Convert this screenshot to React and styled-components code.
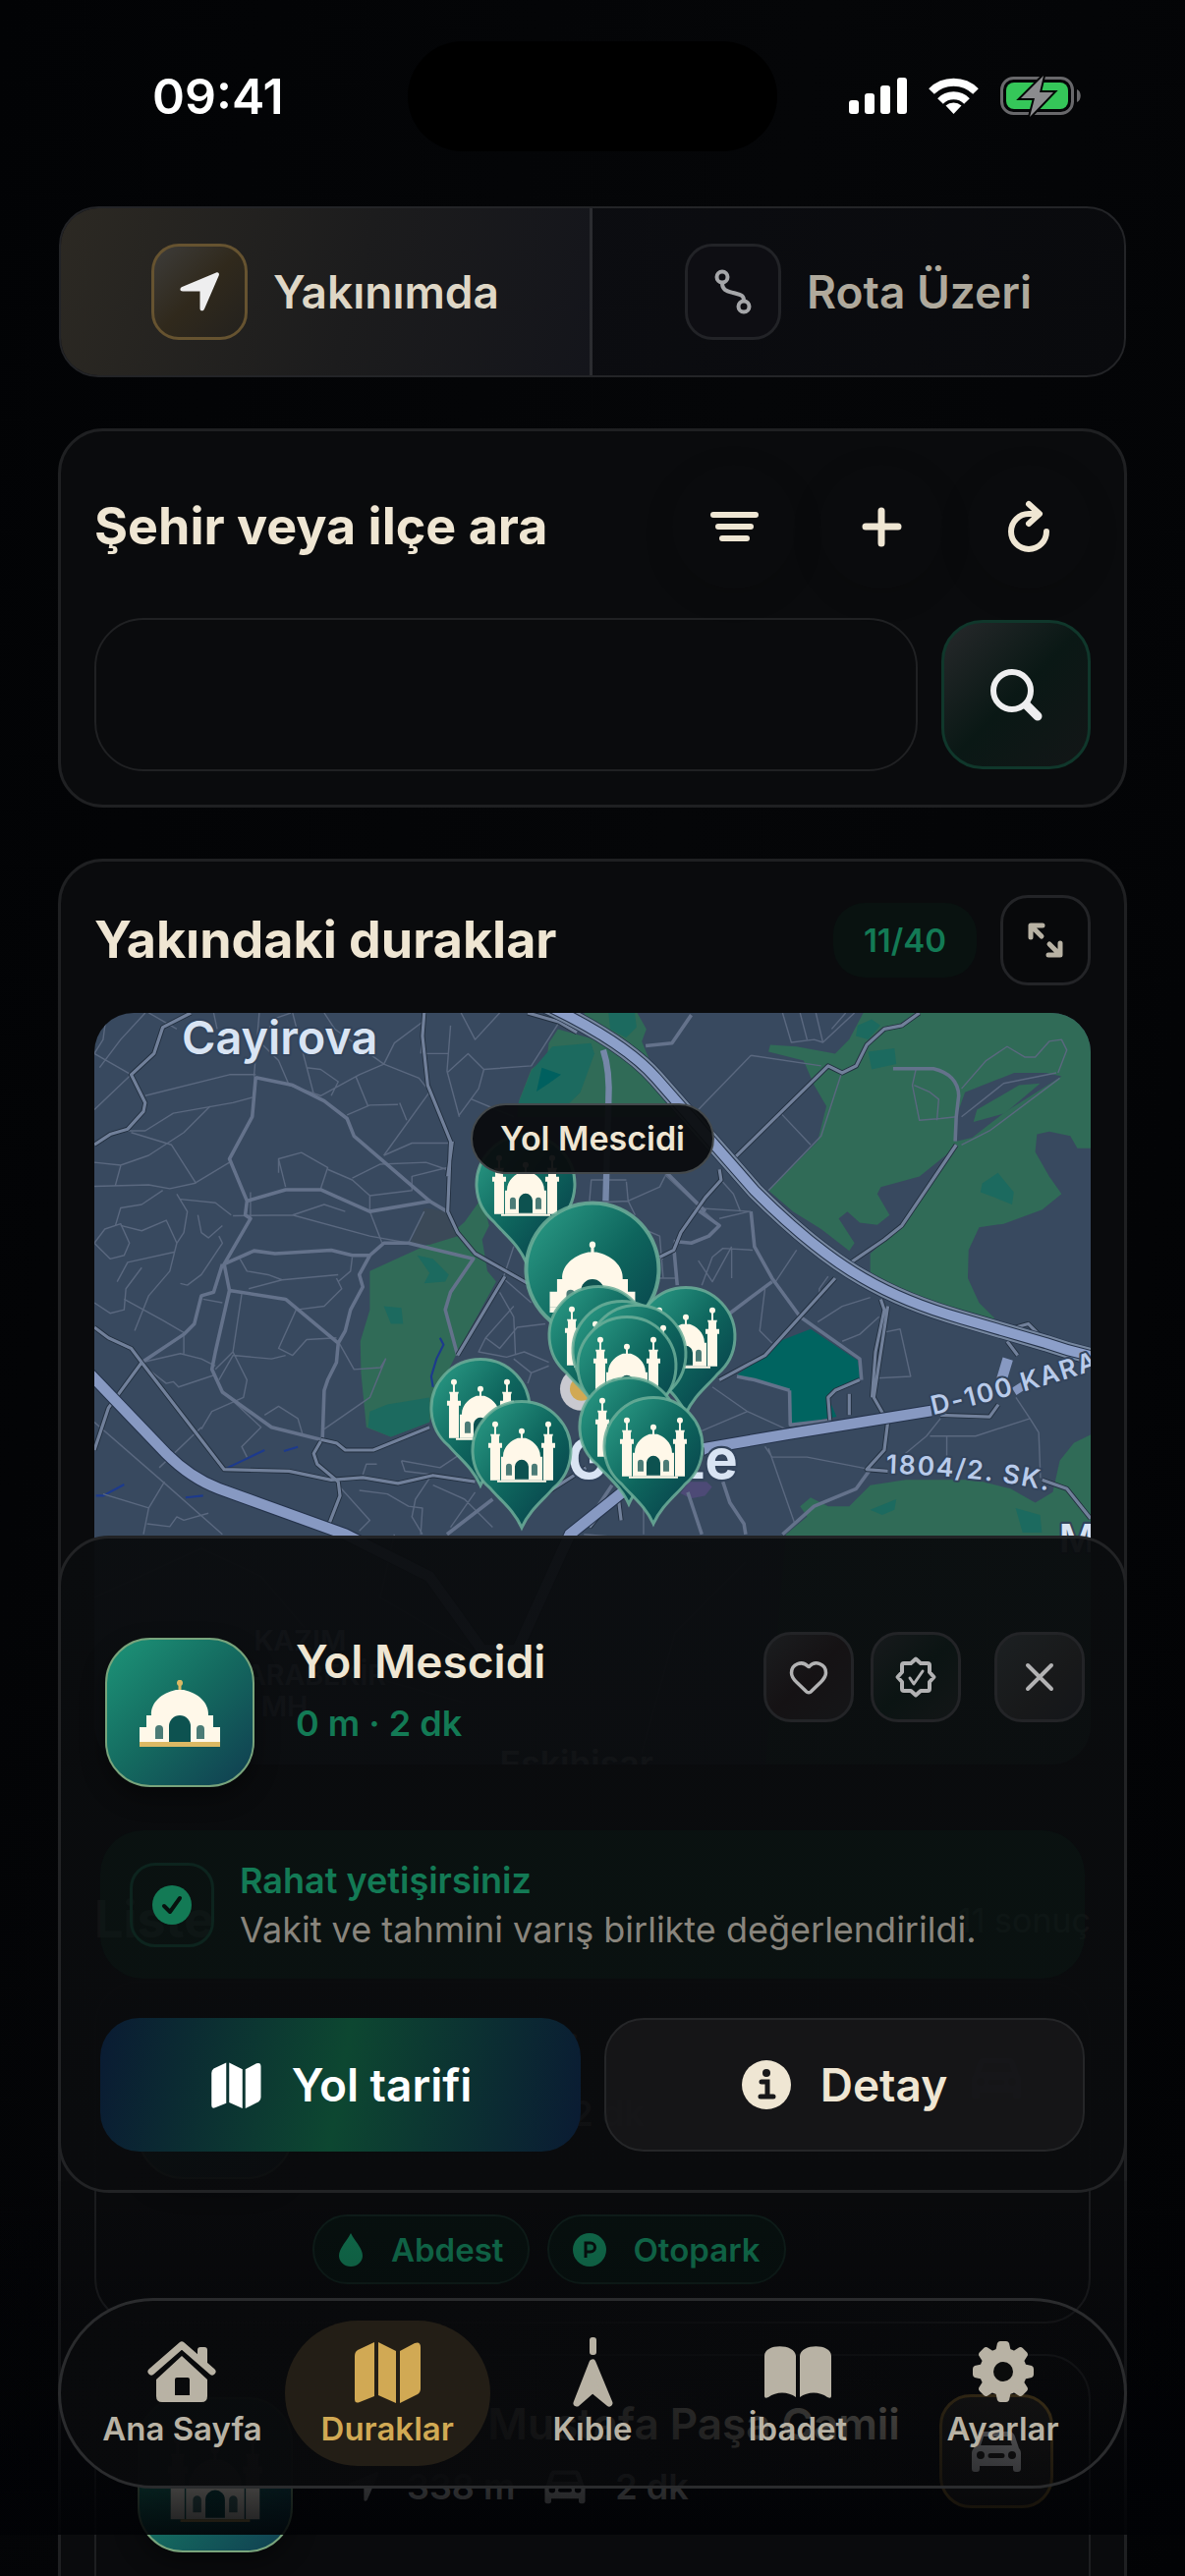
import React, { useId } from 'react'
import styled, { createGlobalStyle, css } from 'styled-components'
import { Heart } from 'lucide-react'

const colors = {
  cream: '#efe6d3',
  muted: '#b8b2a4',
  green: '#137a55',
  gold: '#d1a954',
  line: '#1f2022',
}

const GlobalStyle = createGlobalStyle`
  * {
    box-sizing: border-box;
  }

  body {
    margin: 0;
    background: #030405;
    color: ${colors.cream};
    font-family: Inter, 'Noto Sans', sans-serif;
  }

  button,
  input {
    margin: 0;
    padding: 0;
    border: 0;
    background: none;
    color: inherit;
    font: inherit;
  }

  svg {
    display: block;
    flex: none;
  }
`

const Screen = styled.div`
  position: relative;
  height: 100vh;
  overflow: hidden;
  background: linear-gradient(100deg, #020305, #050608 50%, #020305);
`

const StatusBar = styled.header`
  display: grid;
  grid-template-columns: 1fr 376px 1fr;
  align-items: center;
  height: 195px;
  padding: 0 105px;
`

const Clock = styled.time`
  padding-left: 50px;
  color: #fff;
  font-size: 50px;
  font-weight: 600;
`

const Island = styled.div`
  height: 112px;
  border-radius: 56px;
  background: #000;
`

const StatusIcons = styled.div`
  display: flex;
  justify-content: flex-end;
  align-items: center;
  gap: 22px;
`

const Content = styled.main`
  display: flex;
  flex-direction: column;
  gap: 52px;
  padding: 15px 60px 0;
`

const Segmented = styled.div`
  display: grid;
  grid-template-columns: 1fr 1fr;
  height: 174px;
  border: 2px solid #232427;
  border-radius: 40px;
  background: linear-gradient(110deg, #0e0f14, #090a0d);
  overflow: hidden;
`

const Segment = styled.button`
  display: flex;
  justify-content: center;
  align-items: center;
  gap: 26px;
  color: ${props => (props.$active ? '#dfd7c6' : '#afa99c')};
  font-size: 46px;
  font-weight: 600;
  ${props =>
    props.$active &&
    css`
      border-right: 3px solid #2b2c30;
      background: linear-gradient(105deg, #2c2923, #1c1c1d 55%, #14151b);
    `}
`

const SegmentIcon = styled.span`
  display: grid;
  place-items: center;
  width: 98px;
  height: 98px;
  border: 3px solid ${props => (props.$active ? '#665330' : '#222327')};
  border-radius: 28px;
  background: ${props =>
    props.$active ? 'linear-gradient(135deg, #3d3c3a, #30291c 50%, #23211e)' : '#0e0e13'};
  color: #eeeeef;
`

const Card = styled.section`
  margin: 0 -1px;
  padding: 34px;
  border: 3px solid ${colors.line};
  border-radius: 46px;
  background: #0a0b0d;
`

const CardHeader = styled.div`
  display: flex;
  align-items: center;
  gap: 24px;
  margin-bottom: ${props => props.$gap}px;
`

const Title = styled.h2`
  flex: 1;
  margin: 0;
  font-size: 52px;
  font-weight: 700;
  line-height: 64px;
`

const RoundButton = styled.button`
  display: grid;
  place-items: center;
  width: 126px;
  height: 126px;
  border-radius: 50%;
  box-shadow: 0 8px 30px rgba(0, 5, 10, 0.15);
`

const SearchRow = styled.form`
  display: flex;
  align-items: center;
  gap: 24px;
`

const SearchInput = styled.input`
  flex: 1;
  min-width: 0;
  height: 156px;
  padding: 0 40px;
  border: 2px solid #202123;
  border-radius: 50px;
  font-size: 46px;
  outline: none;
`

const SearchButton = styled.button`
  display: grid;
  place-items: center;
  width: 152px;
  height: 152px;
  border: 3px solid #10372b;
  border-radius: 42px;
  background: linear-gradient(135deg, #27292b, #0a1815 50%, #131617);
  color: #eeeeef;
`

const CountPill = styled.span`
  display: grid;
  place-items: center;
  width: 146px;
  height: 76px;
  border-radius: 32px;
  background: #091210;
  color: ${colors.green};
  font-size: 33px;
  font-weight: 600;
`

const SquareButton = styled.button`
  display: grid;
  place-items: center;
  width: 92px;
  height: 92px;
  border: 3px solid #232427;
  border-radius: 28px;
  background: ${props => props.$bg || '#08090b'};
  color: #b2b2b3;
`

const MapFrame = styled.div`
  position: relative;
  overflow: hidden;
  height: 765px;
  border-radius: 40px;
  background: #38495f;

  > svg {
    width: 100%;
    height: 100%;
  }
`

const MapTooltip = styled.div`
  position: absolute;
  top: 92px;
  left: 50%;
  transform: translateX(-50%);
  padding: 12px 28px;
  border: 2px solid #44494c;
  border-radius: 36px;
  background: rgba(9, 12, 14, 0.95);
  font-size: 34px;
  font-weight: 600;
  line-height: 44px;
  white-space: nowrap;
`

const ListHeader = styled.div`
  display: flex;
  align-items: center;
  margin: 126px 0 30px;
  color: ${colors.cream};
  font-size: 34px;
`

const StopList = styled.ul`
  display: flex;
  flex-direction: column;
  gap: 31px;
  margin: 0;
  padding: 0;
  list-style: none;
`

const Stop = styled.li`
  height: 349px;
  padding: 39px 36px 39px 42px;
  border: 2px solid #1e1f21;
  border-radius: 46px;
`

const StopTop = styled.div`
  display: flex;
  align-items: flex-start;
`

const StopInfo = styled.div`
  flex: 1;
  padding-left: 48px;
`

const StopName = styled.h3`
  margin: 0;
  font-size: 44px;
  font-weight: 600;
  line-height: 60px;
  white-space: nowrap;
`

const StopMeta = styled.div`
  display: flex;
  align-items: center;
  gap: 28px;
  margin-top: 6px;
  padding-left: 8px;
  color: #b4b4b4;
  font-size: 36px;
  font-weight: 600;
  line-height: 56px;
`

const Tile = styled.div`
  display: grid;
  place-items: center;
  width: ${props => props.$size}px;
  height: ${props => props.$size}px;
  margin-top: ${props => props.$drop || 0}px;
  border: 2px solid #79a47c;
  border-radius: 46px;
  background: linear-gradient(135deg, #1d9478, #14695f 50%, #103d50);
  box-shadow: 0 10px 24px rgba(0, 0, 0, 0.4);
`

const RouteButton = styled.button`
  display: grid;
  place-items: center;
  width: 116px;
  height: 116px;
  border: 3px solid #7d6029;
  border-radius: 32px;
  background: #252320;
  color: #f0f0f2;
`

const Chips = styled.div`
  display: flex;
  gap: 18px;
  margin-top: 36px;
  padding-left: 178px;
`

const Chip = styled.span`
  display: flex;
  align-items: center;
  height: 71px;
  padding: 0 24px;
  gap: 28px;
  border: 2px solid #10201c;
  border-radius: 36px;
  background: #081210;
  color: ${colors.green};
  font-size: 33px;
  font-weight: 600;
`

const BottomFade = styled.div`
  position: absolute;
  right: 0;
  bottom: 42px;
  left: 0;
  height: 360px;
  background: linear-gradient(rgba(1, 2, 5, 0.1), rgba(1, 2, 5, 0.4) 55%, rgba(1, 2, 5, 0.9));
`

const Sheet = styled.section`
  position: absolute;
  right: 59px;
  bottom: 390px;
  left: 59px;
  padding: 95px 40px 39px;
  border: 3px solid #222325;
  border-radius: 52px;
  background: linear-gradient(rgba(10, 12, 14, 0.96), rgba(10, 11, 13, 0.97));
`

const SheetHeader = styled.div`
  display: flex;
  align-items: flex-start;
  gap: 17px;
  padding-left: 5px;
`

const SheetInfo = styled.div`
  flex: 1;
  padding-left: 25px;
`

const SheetName = styled.h3`
  margin: 0 0 11px;
  font-size: 46px;
  font-weight: 600;
  line-height: 60px;
`

const Distance = styled.p`
  margin: 0;
  color: ${colors.green};
  font-size: 36px;
  font-weight: 600;
  line-height: 44px;
`

const CloseSlot = styled.div`
  padding-left: 17px;
`

const Notice = styled.div`
  display: flex;
  align-items: center;
  gap: 26px;
  height: 151px;
  margin: 44px 0 40px;
  padding: 0 30px;
  border-radius: 44px;
  background: rgba(10, 28, 22, 0.4);
`

const NoticeIcon = styled.span`
  display: grid;
  place-items: center;
  width: 86px;
  height: 86px;
  border: 3px solid #0d241e;
  border-radius: 26px;
`

const NoticeText = styled.p`
  margin: 0;
  color: #89857d;
  font-size: 36px;
  line-height: 50px;
`

const NoticeTitle = styled.strong`
  display: block;
  color: ${colors.green};
  font-weight: 600;
`

const Actions = styled.div`
  display: grid;
  grid-template-columns: 1fr 1fr;
  gap: 24px;
`

const ActionButton = styled.button`
  display: flex;
  justify-content: center;
  align-items: center;
  gap: 30px;
  height: 136px;
  border: 2px solid ${props => (props.$primary ? 'transparent' : '#252628')};
  border-radius: 40px;
  background: ${props =>
    props.$primary
      ? 'linear-gradient(100deg, #0a1b33, #0d4731 50%, #0a1b33) border-box'
      : 'rgba(24, 24, 26, 0.8)'};
  color: ${props => (props.$primary ? '#fff' : colors.cream)};
  font-size: 46px;
  font-weight: 600;
`

const TabBar = styled.nav`
  position: absolute;
  right: 59px;
  bottom: 89px;
  left: 59px;
  display: grid;
  grid-template-columns: repeat(5, 1fr);
  padding: 20px 19px;
  border: 3px solid #2a2b2d;
  border-radius: 98px;
  background: linear-gradient(
    90deg,
    rgba(9, 10, 12, 0.98),
    rgba(9, 10, 12, 0.95) 40%,
    rgba(9, 10, 12, 0.55) 75%,
    rgba(12, 12, 12, 0.1)
  );
`

const Tab = styled.a`
  display: flex;
  flex-direction: column;
  align-items: center;
  gap: 2px;
  padding: 16px 0 18px;
  border-radius: 75px;
  background: ${props => (props.$active ? '#231e16' : 'none')};
  color: ${props => (props.$active ? colors.gold : colors.muted)};
  font-size: 33px;
  font-weight: 600;
  line-height: 40px;
  text-decoration: none;
  white-space: nowrap;
`

const Cellular = () => (
  <svg width="59" height="37" fill="#fff">
    <rect y="23" width="10" height="14" rx="3" />
    <rect x="16" y="16" width="10" height="21" rx="3" />
    <rect x="32" y="8" width="10" height="29" rx="3" />
    <rect x="49" width="10" height="37" rx="3" />
  </svg>
)

const Wifi = () => (
  <svg width="51" height="37" viewBox="0 0 51 37" fill="none" stroke="#fff" strokeWidth="8">
    <path d="M3 14a32 32 0 0 1 45 0" />
    <path d="M12 24a19 19 0 0 1 27 0" />
    <path d="M25.500 37l-8-8.500a12 12 0 0 1 16 0z" fill="#fff" stroke="none" />
  </svg>
)

const Battery = () => (
  <svg width="83" height="42" viewBox="0 0 83 42">
    <rect x="1.500" y="2.500" width="72" height="36" rx="12" fill="none" stroke="#68686b" strokeWidth="3" />
    <path d="M78 14c5 2 5 11 0 13z" fill="#68686b" />
    <rect x="6" y="7" width="63" height="27" rx="8" fill="#35c759" />
    <path
      d="M44 0L21 23h14L30 42l24-25H40z"
      fill="#8b8b8e"
      stroke="#030405"
      strokeWidth="4"
      paintOrder="stroke"
    />
  </svg>
)

const NearIcon = ({ size = 42 }) => (
  <svg width={size} height={size} viewBox="0 0 42 42" fill="currentColor">
    <path d="M38 1.500c2-.8 3.600.8 2.800 2.800L26 38.500c-1.200 2.800-4.500 2.300-4.500-.6V20.500H4c-3 0-3.500-3.200-.7-4.500z" />
  </svg>
)

const RouteIcon = () => (
  <svg width="42" height="48" viewBox="0 0 42 48" fill="none" stroke="#a5a6a9" strokeWidth="4">
    <circle cx="10" cy="9" r="5.500" />
    <circle cx="32" cy="39" r="5.500" />
    <path d="M10 15c0 7 4 8 11 10s11 2 11 8" />
  </svg>
)

const FilterIcon = () => (
  <svg width="54" height="36" fill="none" stroke="currentColor" strokeWidth="6" strokeLinecap="round">
    <path d="M6 6h43M11 18h33M15 30h25" />
  </svg>
)

const PlusIcon = () => (
  <svg width="44" height="44" fill="none" stroke="currentColor" strokeWidth="7" strokeLinecap="round">
    <path d="M22 6v33M6 22h33" />
  </svg>
)

const ReloadIcon = () => (
  <svg width="50" height="56" fill="none" stroke="currentColor" strokeWidth="6" strokeLinecap="round" strokeLinejoin="round">
    <path d="M34 15H25A18 18 0 1 0 43 33M25 5l11 10-11 10" />
  </svg>
)

const SearchIcon = () => (
  <svg width="54" height="54" fill="none" stroke="currentColor">
    <circle cx="23" cy="23" r="19" strokeWidth="6" />
    <path d="M38 38l11 11" strokeWidth="9" strokeLinecap="round" />
  </svg>
)

const ExpandIcon = () => (
  <svg width="40" height="40" fill="none" stroke={colors.muted} strokeWidth="5" strokeLinecap="round" strokeLinejoin="round">
    <path d="M5 17V5h12M6 6l10 10M35 23v12H23M34 34L24 24" />
  </svg>
)

const SealIcon = () => (
  <svg width="46" height="46" viewBox="-23 -23 46 46" fill="none" stroke="currentColor" strokeWidth="4" strokeLinecap="round" strokeLinejoin="round">
    <path d="M0-18.500L5-14H12Q14-14 14-12V-5L18.500 0L14 5V12Q14 14 12 14H5L0 18.500L-5 14H-12Q-14 14-14 12V5L-18.500 0L-14-5V-12Q-14-14-12-14H-5z" />
    <path d="M-6 1l4 6L7-6" strokeWidth="3" />
  </svg>
)

const CloseIcon = () => (
  <svg width="32" height="32" stroke="currentColor" strokeWidth="4" strokeLinecap="round">
    <path d="M4 4l24 24M28 4L4 28" />
  </svg>
)

const CheckCircle = () => (
  <svg width="42" height="42" fill="none">
    <circle cx="21" cy="21" r="20" fill={colors.green} />
    <path d="M13 22l6 6 10-14" stroke="#07110e" strokeWidth="4" strokeLinecap="round" strokeLinejoin="round" />
  </svg>
)

const InfoIcon = () => (
  <svg width="50" height="50" fill="none">
    <circle cx="25" cy="25" r="25" fill="currentColor" />
    <circle cx="25" cy="13" r="4" fill="#18181a" />
    <path d="M20 22h6v15M19 37h13" stroke="#18181a" strokeWidth="5" strokeLinecap="round" />
  </svg>
)

const CarIcon = ({ size = 56 }) => (
  <svg width={size} height={size} viewBox="0 0 56 56" fill="currentColor" fillRule="evenodd">
    <path d="M15 8h26c3 0 5 2 6 5l4 12c1.500 2 2 3 2 5v16c0 2-1.500 3-3 3h-2c-2 0-3-1-3-3v-3H11v3c0 2-1 3-3 3H6c-2 0-3-1-3-3V30c0-2 .5-3 2-5l4-12c1-3 3-5 6-5zm0 5l-3 9h32l-3-9zM12 28a4 4 0 1 0 0 8 4 4 0 0 0 0-8zm32 0a4 4 0 1 0 0 8 4 4 0 0 0 0-8zm-22 2a2.500 2.500 0 0 0 0 5h12a2.500 2.500 0 0 0 0-5z" />
  </svg>
)

const DropIcon = () => (
  <svg width="26" height="36" viewBox="0 0 26 36" fill="currentColor">
    <path d="M13 1C16 8 25 16 25 24a12 11 0 0 1-24 0C1 16 10 8 13 1z" />
  </svg>
)

const ParkingIcon = () => (
  <svg width="34" height="34" fill="none">
    <circle cx="17" cy="17" r="17" fill="currentColor" />
    <path d="M13 25V10h5a4.500 4.500 0 0 1 0 9h-5" stroke="#081210" strokeWidth="3" />
  </svg>
)

const HomeIcon = () => (
  <svg width="72" height="72" fill="currentColor">
    <path d="M5 36L36 9l31 27" fill="none" stroke="currentColor" strokeWidth="7" strokeLinecap="round" strokeLinejoin="round" />
    <path d="M52 22V14q0-3 3-3h4q3 0 3 3v18z" />
    <path fillRule="evenodd" d="M36 20l26 24v17q0 6-6 6H16q-6 0-6-6V44zM31 42q-2 0-2 2v16h15V44q0-2-2-2z" />
  </svg>
)

const MapIcon = ({ size = 72 }) => (
  <svg width={size} height={size} viewBox="0 0 72 72" fill="currentColor">
    <path d="M3 20q0-4 3-6L23 6v55L8 67q-5 2-5-3z" />
    <path d="M27 6l18 9v53l-18-8z" />
    <path d="M49 15l15-8q6-2 6 4v42q0 4-3 6L49 68z" />
  </svg>
)

const QiblaIcon = () => (
  <svg width="72" height="72" fill="currentColor" stroke="currentColor" strokeLinejoin="round">
    <rect x="33" y="1" width="7" height="18" rx="3" stroke="none" />
    <path d="M36 27L20 68l16-14 17 14z" strokeWidth="7" />
  </svg>
)

const BookIcon = () => (
  <svg width="72" height="72" fill="currentColor">
    <path d="M2 20c0-13 31-13 32 0v42c-8-6-20-6-28 0q-4 2-4-1z" />
    <path d="M38 20c1-13 32-13 32 0v41q0 3-4 1c-8-6-20-6-28 0z" />
  </svg>
)

const GearIcon = () => (
  <svg width="72" height="72" viewBox="-36 -36 72 72">
    <g fill="currentColor">
      {[0, 45, 90, 135].map(angle => (
        <path
          key={angle}
          transform={`rotate(${angle})`}
          d="M-8 -20L-6 -29Q-5 -31 -3 -31H3Q5 -31 6 -29L8 -20V20L6 29Q5 31 3 31H-3Q-5 31 -6 29L-8 20z"
        />
      ))}
    </g>
    <circle r="17" fill="none" stroke="currentColor" strokeWidth="14" />
    <circle r="10" fill="#0b0c0c" />
  </svg>
)

// Domed mosque without minarets, drawn around the centre of its tile
const DomeMosque = ({ accent = '#dcb964' }) => (
  <g>
    <path d="M0-33v12" stroke={accent} strokeWidth="3" />
    <circle cy="-30" r="3" fill={accent} />
    <path
      fill="#fff8e9"
      d="M-41 30V15h7V3h5C-30-10-18-20-4-23h8C18-20 30-10 29 3h5v12h7v15z"
    />
    <path d="M-11 30V14a11 11 0 0 1 22 0v16z" fill="#0d5250" />
    <path d="M-25 27V17a4 4 0 0 1 8 0v10zM17 27V17a4 4 0 0 1 8 0v10z" fill="#4b7b76" />
    <path d="M-41 30h82v5h-82z" fill={accent} />
  </g>
)

const MinaretMosque = ({ accent = '#fff8e9' }) => (
  <g fill="#fff8e9">
    {[-27, 27].map(x => (
      <g key={x} transform={`translate(${x} 0)`}>
        <circle cy="-25" r="3" />
        <path d="M-1-24h2v10h-2zM-5-15H5L4-12V-6h3v5H5v33H-5V-1h-2v-5h3v-6z" />
      </g>
    ))}
    <circle cy="-18" r="3" />
    <path d="M-1-18h2v8h-2zM-19 8C-19-3-10-9-4-11h8C10-9 19-3 19 8h2v24h-42V8z" />
    <path d="M-25 32h50v2h-50z" fill={accent} />
    <path d="M-7 31V18a7 7 0 0 1 14 0v13z" fill="#0d5250" />
    <path d="M-16 27v-9a3 3 0 0 1 6 0v9zM10 27v-9a3 3 0 0 1 6 0v9z" fill="#4b7b76" />
  </g>
)

const pins = [
  { x: 535, y: 1205 },
  { x: 603, y: 1291, big: true },
  { x: 698, y: 1360 },
  { x: 609, y: 1359 },
  { x: 633, y: 1374 },
  { x: 648, y: 1378 },
  { x: 638, y: 1390 },
  { x: 489, y: 1433 },
  { x: 531, y: 1476 },
  { x: 640, y: 1452 },
  { x: 665, y: 1472 },
]

const Pin = ({ x, y, big, fill }) => (
  <g transform={`translate(${x} ${y})`}>
    <path
      transform={big ? 'scale(1.35)' : undefined}
      d="M0 80C-8 62-22 52-32 40A50 50 0 1 1 32 40C22 52 8 62 0 80z"
      fill={fill}
      stroke="#6cae99"
      strokeOpacity=".85"
      strokeWidth="3"
    />
    {big ? (
      <g transform="translate(0 9) scale(1.060)">
        <DomeMosque accent="#fff8e9" />
      </g>
    ) : (
      <MinaretMosque />
    )}
  </g>
)

const minorRoads = [
  'M45 310L150 210M45 150L150 210M80 34L70 110L45 150M190 270L430 210H505M140 370L190 370L270 320L440 290L495 275M60 190L120 110L190 34M200 34L280 80M385 34L395 80',
  'M45 460L120 468L200 440L300 375L375 300M150 375L265 410L335 520M105 525L120 470M45 528L200 524L260 535L330 520L430 460M105 640L120 590L180 580L240 540M45 690L75 650L120 635L145 690L130 725L90 735L45 690',
  'M120 640L180 655L250 625L280 690L260 770L200 840L160 940M280 550L310 600L300 660L280 690M290 565L390 575L435 610M340 610L350 660L370 675L410 640M275 715L140 745L110 800M45 860L90 890L130 880L135 820L180 760',
  'M130 850L240 910L300 945M400 670L410 690L350 780L310 810L290 805M355 850L410 860M465 835L440 1000L390 1050M460 735L480 770L540 780L580 795L740 780M485 820L580 795M570 490V450L635 432L710 475L690 535M570 450L590 530',
  'M440 612L610 610L830 670L940 690M610 610L700 580L760 600M490 545V615M710 480L780 510L830 555L830 600M830 555L950 540V500L1050 475M780 505L860 465L990 460L1048 480M870 440L950 405H1060M765 325L830 297L910 295',
  'M500 215L515 34M520 120L570 170L600 240L690 270L800 210L870 180L970 220L990 245M650 190L690 195L740 230L720 270M700 34L730 80L870 180M870 180L900 120L980 60M610 34L640 150L670 265M530 100L560 50L605 34M790 215L825 300',
  'M990 150H1055M1060 70L1050 200L1085 330M1085 325L1140 250L1155 195L1110 150L1050 205M1155 195L1290 185L1370 60M1120 280L1240 330M990 34L975 150M985 600L940 690M830 600L865 690M1090 34L1130 110L1200 34M915 290L935 340M1000 260L870 440',
  'M740 970L785 1050L860 1045L875 1020L830 1130L700 1220M735 790L750 820L700 870L620 880L570 990L610 1010L650 965L735 960M780 730L775 770L740 800M400 1080L440 1010L550 1020L590 1010M440 1000L480 1080L470 1130L380 1170L350 1220',
  'M180 1030L290 1005L350 1020L390 1040M180 1035L250 1090L270 1085L285 1100L390 1065M300 945L300 1005M350 1215L230 1330M530 1180L570 1155L625 1190L640 1240M440 1140L520 1215L465 1270L480 1300M45 1200L240 1370L410 1520',
  'M70 1405L200 1445L185 1520M200 1445L245 1370M195 1490L260 1498L280 1470L300 1480L370 1460M740 1380L830 1480L800 1510M800 1395L880 1405L940 1440L980 1445L975 1520M920 1310L930 1340L1010 1350M920 1310L1030 1330L1090 1290L1100 1240',
  'M810 1350L820 1320L850 1320M1000 1360L960 1420L950 1470L980 1520M1010 1380L1100 1420L1180 1500M1130 1400L1060 1500M1240 870L1160 960L1140 1000L1220 1015L1270 1000L1340 1030M1200 830L1240 900L1245 1010M1160 960L1200 990L1250 930L1330 920',
  'M1240 700L1210 790L1290 860M1240 1020L1290 1060L1340 1040M1290 1060L1280 1090M1440 1520L1560 1530L1770 1540M1610 1340V1520M1270 700L1350 760M1310 660L1310 780',
]

const minorRoadsEast = [
  'M550 34L575 118L640 110L665 118L755 34M600 34L620 110M645 34L665 118M730 34L690 80M460 155L310 310M460 155L660 185M720 200L660 385L510 540M545 320L630 410M930 195L920 240L940 340L1000 335L1045 330M990 340L995 280L970 260L925 240',
  'M1060 250L1130 170L1190 130L1240 160L1270 160L1310 115L1345 110L1360 140L1335 205M1060 330L1180 235L1330 205M1060 410L1140 370L1340 220M0 575L110 570L200 530L215 500M105 510L5 510L0 570M105 515L110 570L130 610M215 495L370 640',
  'M370 505L410 550L430 600M310 740L350 800L405 700M320 810L350 730L380 705L465 710M405 705V790M590 710L530 800M500 820L485 940L520 975M680 785L655 820V850M650 915L720 870L800 845M720 970L770 950L825 900M835 945L885 935L915 1070L820 1075',
  'M350 1100L450 1170L560 1220M320 1225L450 1170M500 1270L520 1300L620 1300L800 1335M1000 1190L960 1240L900 1290M970 1240L1100 1240L1255 1190L1215 1130M1255 1190L1280 1230L1285 1360M1018 1240V1300M510 1275L585 1490M540 330L410 450',
  'M165 655L200 670L210 790L150 790M150 740L210 735M210 790H250M300 590L460 600M370 620L455 600',
]

const mediumRoads =
  'M505 215L495 330L430 450L480 570L475 610L490 620L415 750L430 825L390 1000L380 1050L410 1115L550 1215L690 1250M410 750L385 830L350 840L330 920L300 950L180 1030M505 218L610 240L700 285L765 335L785 385L1000 570L1050 600M480 570L590 538H690L740 560L830 600L1005 570M415 750L500 712L560 720L720 710L780 725H830L870 690H940L1125 735L1060 830L1045 880L1080 1010M830 725L800 780L810 815L775 880L760 940L740 975L735 1030L710 1080L700 1110L695 1250M430 825L590 850L740 975M1050 1520L1180 1420M1440 1500L1520 1380'

const mediumRoadsEast =
  'M160 128L235 120L290 40M865 193H980Q1050 210 1052 270L1045 330L1042 400M460 600L470 700L520 790L600 900L770 1020L775 1080M520 800L400 890M300 590L370 640L340 670L290 690L240 685M240 700L250 810M800 1335L760 1390L640 1440L550 1520M380 1370L400 1430L440 1490L445 1520M280 1400L320 1520M220 490L330 600M570 1110L470 1080L420 1070M570 1110L572 1208L690 1195'

const darkEdgedRoads =
  'M320 34L240 75L215 150L150 210L190 290L185 315L140 365L90 380L45 410M985 34L980 100L995 240L1060 400L1052 600L1080 660L1130 720L1280 805M1065 400L1052 500M1215 785L1080 1010M45 930L85 960L150 990L180 1030L415 1335L600 1340L720 1365L810 1358L910 1375L1010 1352L1130 1370M180 1030L85 1160L45 1280M690 1250L735 1260L760 1280H840L1000 1215M690 1255L670 1290L680 1320L740 1370L745 1410L710 1500M1280 34L1370 60L1420 90'

const darkEdgedRoadsEast =
  'M940 34L890 70L840 80L790 125L760 185L720 205L680 185L410 450M370 480L375 510L330 560L260 660L240 710L200 730M1045 410L890 640L840 680L745 745M700 790L600 900L500 1010L370 1080M830 850L840 880L815 1000L805 1130M770 1080L700 1110L680 1130L685 1195M740 1120V1180M1290 1365L1360 1390L1428 1475M850 870L810 1130L850 1200L870 1190M850 1200L840 1280L790 1335L850 1340M1180 940L1250 920L1310 980L1428 1000M1190 970L1220 1010M1000 1180L1140 1185L1165 1150M-200 1490L-150 1420L-10 1330M90 1480L80 1400L0 1500'

const StopsMap = () => {
  const id = useId()

  return (
    <svg viewBox="45 34 2839 2142" preserveAspectRatio="xMidYMid slice" role="img" aria-label="Harita">
      <defs>
        <linearGradient id={`${id}pin`} x1="0" y1="0" x2="1" y2="1">
          <stop offset=".1" stopColor="#279480" />
          <stop offset=".5" stopColor="#0e655d" />
          <stop offset=".9" stopColor="#07404a" />
        </linearGradient>
        <path id={`${id}d100`} d="M2436 1180Q2660 1130 2960 1030" />
        <path id={`${id}sk`} d="M2300 1346Q2580 1355 2760 1395" />
      </defs>

      <g fill="#306b57">
        <path d="M1366 80L1470 110L1440 34H1592L1618 80L1605 115L1640 200L1720 295L1700 330H1250L1255 285L1290 195L1335 160L1340 120z" />
        <path d="M830 770L960 710L1060 665L1100 630L1150 560L1170 640L1150 680L1165 770L1190 800L1080 1000L1050 1060L1000 1200L890 1242L820 1215L805 1060L803 970L830 880z" />
        <g transform="translate(1456 0)">
          <path d="M780 34H1440V420H1390L1370 385L1310 372L1275 380L1270 430L1310 500L1345 550L1290 595L1180 635L1110 645L1080 710L1078 790L1110 860L1155 905L1140 915L1000 885L890 830L800 790V720L880 650L1040 420L940 500L830 530L820 550L855 610L820 638L770 632L735 600L710 620L755 690L740 712L660 650L580 600L510 540L650 400L675 300L640 240L610 170L510 145L515 125L590 130L700 150L740 110z" />
          <path d="M500 2200L560 1520L620 1470L600 1440L630 1415L680 1440L740 1440L800 1380L900 1365H1100L1200 1390L1270 1430L1320 1400L1340 1310L1380 1260L1440 1230V2200z" />
        </g>
      </g>
      <g fill="#1c6a5f">
        <path d="M1350 130L1460 120L1470 150L1430 260L1390 300H1250L1290 200z" />
        <path d="M1510 34H1585L1590 75L1560 105L1515 80zM965 725L1010 735L1055 780L1045 800L985 805L1000 775z" />
        <path d="M870 870L920 875L925 920H890zM830 1170L880 1150L1000 1130V1200L890 1242L825 1215z" />
        <path d="M2220 70L2260 52L2285 70L2250 110L2215 100zM2250 145L2325 135L2330 180L2260 195zM2575 520L2620 490L2665 545L2660 580L2610 560L2570 545z" />
        <path d="M2255 1450L2330 1420L2325 1450L2290 1465zM2670 1445L2740 1465L2745 1515H2690z" />
      </g>
      <path d="M1320 190L1375 210L1340 235L1305 258z" fill="#00605f" />
      <path d="M1876 1065L1956 1010L1996 970L2086 935L2221 1025L2226 1080L2156 1110L2136 1130L2160 1185L2026 1210V1110L1926 1080z" fill="#006460" />
      <path d="M2501 330L2526 260L2666 205L2756 205L2801 215L2636 320L2546 390L2501 400z" fill="#38495f" />
      <path d="M2550 345L2560 310L2680 240L2740 235L2640 320z" fill="#306b57" />
      <path d="M1740 1370h50l15 15-20 25-40 8-30-15z" fill="#4d4a76" />
      <path d="M985 590L1050 600L1060 640L1080 670L1000 695L945 690z" fill="#3b4958" />
      <path d="M1030 960l10 20-20 40-15 50 5 30M50 1410h20L130 1378M305 1415l50-5M415 1335L530 1280M585 1283l40-12" stroke="#1d3a8d" strokeWidth="6" fill="none" />

      <g fill="none" stroke="#5a687f" strokeWidth="4" strokeLinejoin="round">
        {minorRoads.map(d => (
          <path key={d} d={d} />
        ))}
        <g transform="translate(1456 0)">
          {minorRoadsEast.map(d => (
            <path key={d} d={d} />
          ))}
        </g>
        <path d="M45 1700L350 1560L520 1640L740 1900L1100 2000M900 1520L860 1700L1200 1900M1900 1600L1700 1800L1600 2160" />
      </g>
      <g fill="none" stroke="#64728b" strokeWidth="10" strokeLinejoin="round">
        <path d={mediumRoads} />
        <path d={mediumRoadsEast} transform="translate(1456 0)" />
      </g>
      {['#222f3f', '#71809a'].map((stroke, i) => (
        <g key={stroke} fill="none" stroke={stroke} strokeWidth={i ? 9 : 14} strokeLinejoin="round">
          <path d={darkEdgedRoads} />
          <path d={darkEdgedRoadsEast} transform="translate(1456 0)" />
        </g>
      ))}
      <path d="M1495 140Q1515 200 1510 290L1502 570" fill="none" stroke="#7587a8" strokeWidth="18" />

      {/* motorways, each layer narrower than the one below */}
      {[
        ['#25334a', 50],
        ['#76879f', 46],
        ['#25334a', 34],
        ['#8c9fc9', 28],
      ].map(([stroke, width]) => (
        <path
          key={width}
          d="M1330 10C1456 70 1576 140 1646 220L1926 540Q2096 710 2236 790Q2356 860 2516 905L2756 975Q2826 1000 2900 1015"
          fill="none"
          stroke={stroke}
          strokeWidth={width}
        />
      ))}
      <g fill="none" stroke="#24324a" strokeWidth="36">
        <path d="M30 1060L250 1290Q320 1360 400 1390L760 1520L1000 1640L1150 1850L1250 1850L1400 1520L1550 1400L1786 1275L2016 1235L2430 1168" />
      </g>
      <g fill="none" stroke="#8799c2" strokeWidth="30">
        <path d="M30 1060L250 1290Q320 1360 400 1390L760 1520L1000 1640L1150 1850L1250 1850L1400 1520L1550 1400L1786 1275L2016 1235L2430 1168" />
        <path d="M2648 1020L2630 1080M2672 1095L2685 1115" />
      </g>

      <g
        fill="#d9e4f3"
        stroke="#33445c"
        strokeWidth="12"
        paintOrder="stroke"
        strokeLinejoin="round"
        fontWeight="600"
      >
        <text x="294" y="151" fontSize="131">Cayirova</text>
        <text x="1394" y="1362" fontSize="156" fontWeight="700">Gebze</text>
        <text x="2794" y="1572" fontSize="112">M</text>
        <g fill="#b9cbea" fontSize="74" letterSpacing="5">
          <text>
            <textPath href={`#${id}d100`}>D-100 KARAYOLU</textPath>
          </text>
          <text>
            <textPath href={`#${id}sk`}>1804/2. SK.</textPath>
          </text>
        </g>
        <g fontSize="80" fill="#b9cbea">
          <text x="500" y="1850">KAZIM</text>
          <text x="420" y="1950">KARABEKİR</text>
          <text x="520" y="2040">MH.</text>
        </g>
        <text x="1200" y="2210" fontSize="100">Eskihisar</text>
      </g>

      <g transform="translate(-224 -2856) scale(2.800)">
        <circle cx="592" cy="1415" r="22" fill="#c9c9d0" />
        <circle cx="592" cy="1415" r="12" fill={colors.gold} />
        {pins.map(pin => (
          <Pin key={`${pin.x}-${pin.y}`} {...pin} fill={`url(#${id}pin)`} />
        ))}
      </g>
    </svg>
  )
}

const tabs = [
  { label: 'Ana Sayfa', Icon: HomeIcon },
  { label: 'Duraklar', Icon: MapIcon, active: true },
  { label: 'Kıble', Icon: QiblaIcon },
  { label: 'İbadet', Icon: BookIcon },
  { label: 'Ayarlar', Icon: GearIcon },
]

const stops = [
  { name: 'Yol Mescidi', distance: '0 m', time: '2 dk', Mosque: DomeMosque },
  { name: 'Çoban Mustafa Paşa Camii', distance: '338 m', time: '2 dk', Mosque: MinaretMosque },
]

const StopCard = ({ name, distance, time, Mosque }) => (
  <Stop>
    <StopTop>
      <Tile $size={158} $drop={3}>
        <svg width="150" height="150" viewBox="-53 -53 106 106">
          <Mosque accent="#dcb964" />
        </svg>
      </Tile>
      <StopInfo>
        <StopName>{name}</StopName>
        <StopMeta>
          <NearIcon size={32} />
          {distance}
          <CarIcon size={46} />
          {time}
        </StopMeta>
      </StopInfo>
      <RouteButton aria-label={`${name} rota`}>
        <CarIcon />
      </RouteButton>
    </StopTop>
    <Chips>
      <Chip>
        <DropIcon />
        Abdest
      </Chip>
      <Chip>
        <ParkingIcon />
        Otopark
      </Chip>
    </Chips>
  </Stop>
)

export default function App() {
  return (
    <Screen>
      <GlobalStyle />
      <StatusBar>
        <Clock>09:41</Clock>
        <Island />
        <StatusIcons>
          <Cellular />
          <Wifi />
          <Battery />
        </StatusIcons>
      </StatusBar>

      <Content>
        <Segmented>
          <Segment $active>
            <SegmentIcon $active>
              <NearIcon />
            </SegmentIcon>
            Yakınımda
          </Segment>
          <Segment>
            <SegmentIcon>
              <RouteIcon />
            </SegmentIcon>
            Rota Üzeri
          </Segment>
        </Segmented>

        <Card>
          <CardHeader $gap={30}>
            <Title as="label" htmlFor="city">
              Şehir veya ilçe ara
            </Title>
            <RoundButton aria-label="Filtrele">
              <FilterIcon />
            </RoundButton>
            <RoundButton aria-label="Ekle">
              <PlusIcon />
            </RoundButton>
            <RoundButton aria-label="Yenile">
              <ReloadIcon />
            </RoundButton>
          </CardHeader>
          <SearchRow onSubmit={event => event.preventDefault()}>
            <SearchInput id="city" type="text" />
            <SearchButton aria-label="Ara">
              <SearchIcon />
            </SearchButton>
          </SearchRow>
        </Card>

        <Card>
          <CardHeader $gap={28}>
            <Title>Yakındaki duraklar</Title>
            <CountPill>11/40</CountPill>
            <SquareButton aria-label="Haritayı büyüt">
              <ExpandIcon />
            </SquareButton>
          </CardHeader>
          <MapFrame>
            <StopsMap />
            <MapTooltip>Yol Mescidi</MapTooltip>
          </MapFrame>
          <ListHeader>
            <Title>Liste</Title>
            11 sonuç
          </ListHeader>
          <StopList>
            {stops.map(stop => (
              <StopCard key={stop.name} {...stop} />
            ))}
          </StopList>
        </Card>
      </Content>

      <BottomFade />

      <Sheet>
        <SheetHeader>
          <Tile $size={152} $drop={6}>
            <svg width="106" height="106" viewBox="-53 -53 106 106">
              <DomeMosque />
            </svg>
          </Tile>
          <SheetInfo>
            <SheetName>Yol Mescidi</SheetName>
            <Distance>0 m · 2 dk</Distance>
          </SheetInfo>
          <SquareButton $bg="linear-gradient(135deg, #1b1d1f, #151214 50%, #151618)" aria-label="Favorilere ekle">
            <Heart size={42} strokeWidth={2} />
          </SquareButton>
          <SquareButton $bg="linear-gradient(135deg, #171a1c, #0b1413 50%, #131617)" aria-label="Doğrula">
            <SealIcon />
          </SquareButton>
          <CloseSlot>
            <SquareButton $bg="linear-gradient(135deg, #1c2022, #18191a 60%, #14161a)" aria-label="Kapat">
              <CloseIcon />
            </SquareButton>
          </CloseSlot>
        </SheetHeader>
        <Notice>
          <NoticeIcon>
            <CheckCircle />
          </NoticeIcon>
          <NoticeText>
            <NoticeTitle>Rahat yetişirsiniz</NoticeTitle>
            Vakit ve tahmini varış birlikte değerlendirildi.
          </NoticeText>
        </Notice>
        <Actions>
          <ActionButton $primary>
            <MapIcon size={54} />
            Yol tarifi
          </ActionButton>
          <ActionButton>
            <InfoIcon />
            Detay
          </ActionButton>
        </Actions>
      </Sheet>

      <TabBar>
        {tabs.map(({ label, Icon, active }) => (
          <Tab key={label} href="#" $active={active}>
            <Icon />
            {label}
          </Tab>
        ))}
      </TabBar>
    </Screen>
  )
}
